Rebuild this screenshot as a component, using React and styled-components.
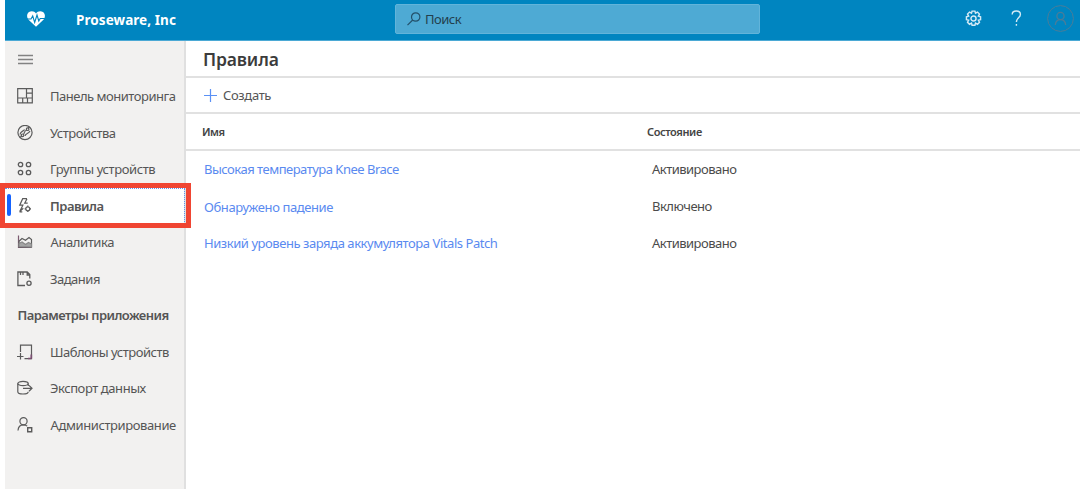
import React from 'react';
import styled, { createGlobalStyle } from 'styled-components';

const Global = createGlobalStyle`
  *, *::before, *::after { box-sizing: border-box; }
  body { margin: 0; background: #fff; overflow: hidden; }
`;

const Shell = styled.div`
  width: 1080px;
  height: 489px;
  padding-left: 5px;
  display: flex;
  flex-direction: column;
  background: #fff;
  color: #555;
  font: 13px/18px "Noto Sans", "Open Sans", sans-serif;
  white-space: nowrap;
`;

const Header = styled.header`
  flex: none;
  height: 41px;
  display: flex;
  align-items: center;
  background: #0085c0;
  border-bottom: 1px solid #4ba9d5;
  color: #fff;
`;

const Logo = styled.svg`
  flex: none;
  margin: 0 0 3px 22px;
`;

const Brand = styled.div`
  flex: none;
  width: 350px;
  padding-left: 31px;
  font-size: 13.5px;
  font-weight: 700;
  letter-spacing: ${(p) => p.$track}px;
`;

const Search = styled.div`
  flex: none;
  width: 365px;
  height: 30px;
  margin-top: -3px;
  padding-left: 11px;
  display: flex;
  align-items: center;
  gap: 4px;
  background: #4eaad4;
  border: 1px solid #62b4da;
  border-radius: 2px;
  color: #23404d;
  letter-spacing: ${(p) => p.$track}px;
`;

const Actions = styled.div`
  flex: 1;
  display: flex;
  align-items: center;
  justify-content: flex-end;
  padding: 0 6px 3px 0;
`;

const Action = styled.svg`
  flex: none;
  margin-left: ${(p) => p.$gap}px;
`;

const Body = styled.div`
  flex: 1;
  display: flex;
  min-height: 0;
`;

const Sidebar = styled.nav`
  width: 181px;
  background: #f2f1f0;
  border-right: 2px solid #e0e0e0;
`;

const MenuToggle = styled.div`
  height: 37px;
  padding-left: 13px;
  display: flex;
  align-items: center;
`;

const NavItem = styled.div`
  position: relative;
  height: 36.55px;
  padding-left: 12px;
  display: flex;
  align-items: center;
  gap: ${(p) => p.$gap || 17}px;
  font-weight: ${(p) => (p.$active ? 600 : 400)};
  background: ${(p) => (p.$active ? '#fff' : 'transparent')};
  svg { flex: none; }
`;

const Marker = styled.i`
  position: absolute;
  left: 2px;
  top: 6.500px;
  width: 3.500px;
  height: 22px;
  border-radius: 2px;
  background: #1463ff;
  z-index: 1;
`;

const Focus = styled.i`
  position: absolute;
  inset: 0 -1px 0 0;
  border: 1px dotted #5c94ef;
  border-left: 0;
`;

const Callout = styled.i`
  position: absolute;
  left: -5px;
  top: -5px;
  width: 191px;
  height: 45px;
  border: 5px solid #f04532;
  z-index: 1;
`;

const Label = styled.span`
  letter-spacing: ${(p) => p.$track || 0}px;
`;

const SectionTitle = styled.div`
  height: 36px;
  padding: 0 0 1px 12.5px;
  display: flex;
  align-items: center;
  font-weight: 600;
  letter-spacing: ${(p) => p.$track}px;
`;

const Main = styled.main`
  flex: 1;
`;

const Title = styled.h1`
  margin: 0;
  height: 37px;
  padding: 0 0 0 17px;
  display: flex;
  align-items: center;
  border-bottom: 2px solid #e1e1e1;
  color: #3c3c3c;
  font-size: 17.5px;
  font-weight: 600;
  letter-spacing: ${(p) => p.$track}px;
`;

const Toolbar = styled.div`
  height: 36px;
  padding-left: 18px;
  display: flex;
  align-items: center;
  gap: 6px;
  border-bottom: 2px solid #e1e1e1;
`;

const TableRow = styled.div`
  height: ${(p) => p.$height || 37}px;
  display: grid;
  grid-template-columns: 448px 1fr;
  align-items: center;
  padding-left: 18px;
  color: #4b4b4b;
`;

const TableHead = styled(TableRow)`
  padding-left: 16px;
  grid-template-columns: 445px 1fr;
  border-bottom: 2px solid #e1e1e1;
  color: #444;
  font-size: 11px;
  font-weight: 600;
`;

const RuleLink = styled.a`
  padding-top: ${(p) => p.$drop || 0}px;
  color: #5a8af0;
  letter-spacing: ${(p) => p.$track}px;
`;

const iconProps = { width: 16, height: 16, viewBox: '0 0 16 16', fill: 'none', stroke: '#5b5b5b', strokeWidth: 1.2 };

const icons = {
  dashboard: <svg {...iconProps}><path d="M.7.7h14.600v14.200H.7zM9.500.7v9.300M.7 10h14.600M9.500 5.200h5.800M5.700 10v4.900M10.500 10v4.900" /></svg>,
  devices: <svg {...iconProps}><circle cx="8" cy="7.500" r="7.100" /><path d="M3 12.500 5 10.800M6.300 9.500C8 8.500 6.500 6 9.700 5M11 3.200 12.500 2M3 9.500C3.500 6 6.500 6.500 7.500 4.500M8 11c.5-3 3.500-2 5-5" /><circle cx="10.600" cy="4.200" r="1.300" /><circle cx="5.500" cy="10.300" r="1.300" /></svg>,
  groups: <svg {...iconProps} strokeWidth="1.300"><circle cx="3.500" cy="3.500" r="2.200" /><circle cx="11.500" cy="3.500" r="2.200" /><circle cx="3.500" cy="11.500" r="2.200" /><circle cx="11.500" cy="11.500" r="2.200" /></svg>,
  rules: <svg {...iconProps} strokeWidth="1.200"><path d="M10 .7H5.700L2.700 7.200h3.200L2.700 13.500l3.600-3.200M10 .7 7.700 5.200h3M2.500 13.800h2.800" /><circle cx="10.800" cy="10.800" r="2" /><path d="M10.800 7.600v1.200M10.800 12.800V14M7.600 10.800h1.200M12.800 10.800H14" /></svg>,
  analytics: <svg {...iconProps}><path d="M1.500 1.500v12h13.200" stroke="#7b5b70" /><path d="M2 7.200 5 4.500l3.500 1.700L12 3.500l2.500 2v7.500H2z" /><path d="M2 12.500V9.500l3-1.500 3.500 2.500 3-2 3 1.500v3z" fill="#a5a5a5" stroke="#888" /></svg>,
  jobs: <svg {...iconProps} strokeWidth="1.300"><path d="M8 14.500H.9V1h9.300l2.600 2.600v4M10.200 1v3h2.600M3.500 1v3M6 1v3" /><circle cx="12" cy="12.300" r="2.100" /></svg>,
  templates: <svg {...iconProps}><path d="M3.500 8V1.200h11v13.500H7.500M0 12.500h6.500M3.500 9v6.500" /><path d="M14.300 10.500v4M11 14.500h3.500" stroke="#7b4f72" strokeWidth="1.700" /></svg>,
  exporting: <svg {...iconProps}><ellipse cx="6" cy="3.500" rx="5.200" ry="2.200" /><path d="M.8 3.500v8.200c0 1.300 2.300 2.300 5.200 2.300s5.200-1 5.200-2.300M11.200 3.500V6M6 8.300h8.800M12 5.400l3 2.900-3 2.900" /></svg>,
  admin: <svg {...iconProps}><circle cx="6.500" cy="4.200" r="3.600" /><path d="M1 13.500c.2-3.500 2.300-5.700 5.500-5.700 1.600 0 2.800.5 3.700 1.400" /><path d="M10.700 10.700h4v4h-4z" strokeWidth="1.400" /></svg>,
};

const mainNav = [
  { id: 'dashboard', text: 'Панель мониторинга', track: -0.49 },
  { id: 'devices', text: 'Устройства', track: -0.48 },
  { id: 'groups', text: 'Группы устройств', track: -0.39 },
  { id: 'rules', text: 'Правила', track: -0.5, active: true },
  { id: 'analytics', text: 'Аналитика', track: -0.4, gap: 17.5 },
  { id: 'jobs', text: 'Задания', track: -0.5 },
];

const settingsNav = [
  { id: 'templates', text: 'Шаблоны устройств', track: -0.49 },
  { id: 'exporting', text: 'Экспорт данных', track: -0.43 },
  { id: 'admin', text: 'Администрирование', track: -0.4, gap: 17.5 },
];

const rules = [
  { name: 'Высокая температура Knee Brace', track: -0.5, state: 'Активировано', stateTrack: -0.52, height: 36 },
  { name: 'Обнаружено падение', track: -0.4, state: 'Включено', stateTrack: -0.5, height: 38, drop: 2 },
  { name: 'Низкий уровень заряда аккумулятора Vitals Patch', track: -0.44, state: 'Активировано', stateTrack: -0.52, height: 36 },
];

function NavEntry({ item }) {
  return (
    <NavItem $active={item.active} $gap={item.gap}>
      {item.active && <Marker />}
      {item.active && <Focus />}
      {item.active && <Callout />}
      {icons[item.id]}
      <Label $track={item.track}>{item.text}</Label>
    </NavItem>
  );
}

export default function App() {
  return (
    <Shell>
      <Global />
      <Header>
        <Logo width="18" height="16" viewBox="0 0 18 16">
          <path d="M9 15.800 1.300 8.400C-.6 6.200-.2 2.600 2 1.100 4.400-.5 7.500.1 9 2.500 10.500.1 13.600-.5 16 1.100c2.200 1.500 2.600 5.100.7 7.300z" fill="#fff" />
          <path d="M0 8h4l1.700-3 2 6.500L10 4l1.800 6L13.200 7.500H18" fill="none" stroke="#0085c0" strokeWidth="1.100" />
        </Logo>
        <Brand $track={0.07}>Proseware, Inc</Brand>
        <Search $track={-0.5}>
          <svg width="14" height="14" viewBox="0 0 14 14" fill="none" stroke="#23506a" strokeWidth="1.200">
            <circle cx="8.700" cy="5" r="4.200" />
            <path d="M5.700 8 .5 13.200" />
          </svg>
          Поиск
        </Search>
        <Actions>
          <Action $gap={0} width="17" height="17" viewBox="0.500 -0.200 15 15.400" fill="none" stroke="#d3eaf5" strokeWidth="1.300">
            <path d="M6.700.8h2.600l.5 1.900 1.800-1 1.800 1.800-1 1.800 2 .6v2.600l-2 .5 1 1.900-1.800 1.800-1.800-1-.5 1.900H6.700l-.5-1.900-1.800 1-1.800-1.800 1-1.900-2-.5V5.900l2-.6-1-1.800 1.800-1.800 1.800 1z" />
            <circle cx="8" cy="7.500" r="2.300" />
          </Action>
          <Action $gap={29} width="11" height="17" viewBox="0 0 11 17" fill="none" stroke="#d3eaf5" strokeWidth="1.400">
            <path d="M1.200 4.500C1.200 2.300 3 1 5.300 1s4.100 1.400 4.100 3.500c0 3.300-4 3.500-4 7.500M5.400 14v1.800" />
          </Action>
          <Action $gap={25} width="27" height="27" viewBox="0 0 27 27" fill="none" stroke="#4a7c98" strokeWidth="1">
            <circle cx="13.500" cy="13.500" r="12.900" />
            <circle cx="13.500" cy="11" r="3.600" strokeWidth="1.300" />
            <path d="M8.300 20c.3-3.300 2.300-5.300 5.200-5.300s4.900 2 5.200 5.300" strokeWidth="1.300" />
          </Action>
        </Actions>
      </Header>
      <Body>
        <Sidebar>
          <MenuToggle>
            <svg width="15" height="11" viewBox="0 0 15 11" stroke="#828282" strokeWidth="1.300">
              <path d="M0 1.500h15M0 5.500h15M0 9.500h15" />
            </svg>
          </MenuToggle>
          {mainNav.map((item) => <NavEntry key={item.id} item={item} />)}
          <SectionTitle $track={-0.56}>Параметры приложения</SectionTitle>
          {settingsNav.map((item) => <NavEntry key={item.id} item={item} />)}
        </Sidebar>
        <Main>
          <Title $track={-0.15}>Правила</Title>
          <Toolbar>
            <svg width="13" height="13" viewBox="0 0 13 13" stroke="#5b91f5" strokeWidth="1.200">
              <path d="M6.500 0v13M0 6.500h13" />
            </svg>
            <Label $track={-0.35}>Создать</Label>
          </Toolbar>
          <TableHead>
            <Label $track={-0.5}>Имя</Label>
            <Label $track={-0.4}>Состояние</Label>
          </TableHead>
          {rules.map((rule) => (
            <TableRow key={rule.name} $height={rule.height}>
              <RuleLink $track={rule.track} $drop={rule.drop}>{rule.name}</RuleLink>
              <Label $track={rule.stateTrack}>{rule.state}</Label>
            </TableRow>
          ))}
        </Main>
      </Body>
    </Shell>
  );
}
